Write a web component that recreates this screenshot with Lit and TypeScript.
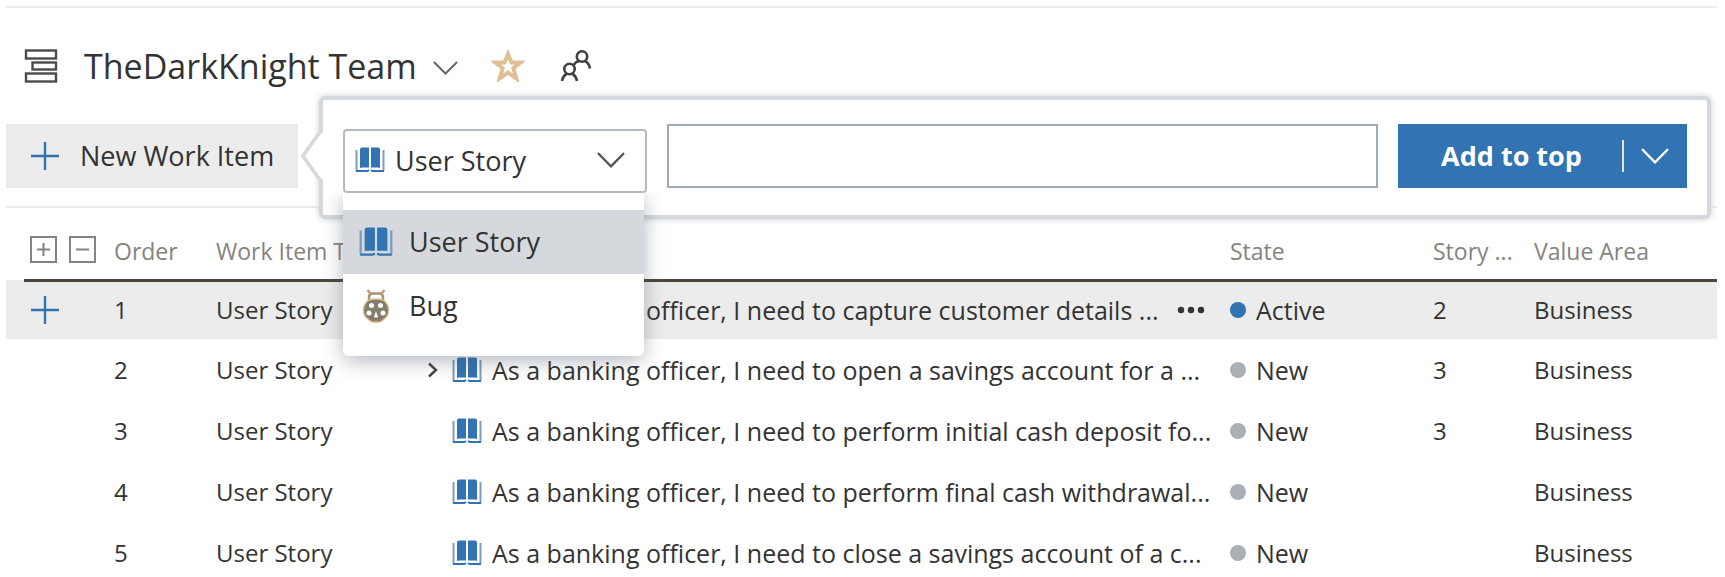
import { LitElement, html, css, svg, nothing } from "lit";
import { customElement, state } from "lit/decorators.js";

interface WorkItem {
  order: number;
  title: string;
  state: "Active" | "New";
  points?: number;
  expandable?: boolean;
}

const ITEMS: WorkItem[] = [
  { order: 1, title: "As a banking officer, I need to capture customer details ...", state: "Active", points: 2 },
  { order: 2, title: "As a banking officer, I need to open a savings account for a ...", state: "New", points: 3, expandable: true },
  { order: 3, title: "As a banking officer, I need to perform initial cash deposit fo...", state: "New", points: 3 },
  { order: 4, title: "As a banking officer, I need to perform final cash withdrawal...", state: "New" },
  { order: 5, title: "As a banking officer, I need to close a savings account of a c...", state: "New" },
];

const book = (width: number, height: number) => html`
  <svg class="icon" width=${width} height=${height} viewBox="0 0 30 26" preserveAspectRatio="none" aria-hidden="true">
    ${svg`<path d="M5 2.5Q5 .5 7 .5H14V20.5H7Q5 20.5 5 21.5ZM16 .5H23Q25 .5 25 2.5V21.5Q25 20.5 23 20.5H16Z" fill="#3173b3"/>
    <path d="M1.5 3V24M28.5 3V24" stroke="#7c9dc0" stroke-width="2" fill="none"/>
    <path d="M1 24H12.5L14 23M29 24H17.5L16 23" stroke="#3173b3" stroke-width="2" fill="none"/>`}
  </svg>`;

const plus = html`
  <svg class="icon" width="30" height="30" viewBox="0 0 30 30" aria-hidden="true">
    <path d="M15 1V29M1 15H29" stroke="#3173b3" stroke-width="2.4" fill="none" />
  </svg>`;

const chevron = (width: number, height: number) => html`
  <svg class="icon" width=${width} height=${height} viewBox="0 0 28 15" preserveAspectRatio="none" aria-hidden="true">
    <path d="M1 1L14 13.5L27 1" stroke="currentColor" stroke-width="2.2" fill="none" />
  </svg>`;

const bug = html`
  <svg class="icon" width="34" height="34" viewBox="0 0 34 34" aria-hidden="true">
    <path d="M10 12V8Q10 5 13 4.500H21Q24 5 24 8V12Z" fill="#fff" stroke="#a8926f" stroke-width="2.400" />
    <path d="M8.500 1L12 5M25.500 1L22 5" stroke="#b79c76" stroke-width="2.400" fill="none" />
    <path d="M10 11Q17 9 24 11Q29.500 15 29.500 21Q29.500 27 25 30Q22 33 20 33H14Q12 33 9 30Q4.500 27 4.500 21Q4.500 15 10 11Z" fill="#857d6e" stroke="#d9b889" stroke-width="1.400" />
    <g fill="#fff">
      <circle cx="12.500" cy="16.500" r="2.500" /><circle cx="21.500" cy="16.500" r="2.500" />
      <circle cx="10" cy="24" r="2.500" /><circle cx="24" cy="24" r="2.500" />
      <path d="M17 22L19 28Q17 29.500 15 28Z" />
    </g>
  </svg>`;

@customElement("app-root")
export class AppRoot extends LitElement {
  @state() private kind = "User Story";

  static styles = css`
    :host {
      display: block;
      box-sizing: border-box;
      height: 100vh;
      overflow: hidden;
      padding-top: 6px;
      background: #fff;
      color: #333;
      font: 24px/32px "Open Sans", "Noto Sans", sans-serif;
    }
    *, *::before, *::after { box-sizing: border-box; }
    button, select, input { font: inherit; color: inherit; margin: 0; border-radius: 0; }
    button { border: 0; padding: 0; background: none; cursor: pointer; }
    .icon { display: block; flex: none; }

    .head {
      display: flex;
      align-items: center;
      height: 118px;
      margin: 0 8px 0 6px;
      padding-left: 18px;
      border-top: 2px solid #ececec;
    }
    .team { margin: 0 0 0 26px; font: inherit; }
    .team-pick { display: flex; align-items: center; gap: 16px; font-size: 34px; line-height: 48px; }
    .team-pick .icon { margin-top: 4px; color: #666; }
    .star { margin-left: 33px; }
    .people { margin-left: 35px; }

    .toolbar {
      position: relative;
      margin: 0 8px 0 6px;
      padding-bottom: 18px;
      border-bottom: 2px solid #ececec;
    }
    .new-item {
      display: flex;
      align-items: center;
      gap: 20px;
      height: 64px;
      padding: 0 24px;
      background: #ececec;
      font-size: 27px;
    }
    .callout {
      position: absolute;
      z-index: 2;
      left: 313px;
      right: 6px;
      top: -28px;
      display: flex;
      align-items: flex-start;
      gap: 20px;
      height: 123px;
      padding: 24px 20px;
      background: #fff;
      border: 4px solid #d5d9dd;
      border-radius: 6px;
      box-shadow: 0 0 6px #ccc;
    }
    .pointer { position: absolute; left: -22px; top: 31px; }
    .kind { position: relative; flex: none; width: 304px; margin-top: 5px; }
    .kind-select {
      display: block;
      appearance: none;
      width: 100%;
      height: 64px;
      padding: 0 50px 0 50px;
      background: #fff;
      border: 2px solid #b3bac1;
      border-radius: 4px;
      font-size: 27px;
      line-height: 40px;
    }
    .kind-icon { position: absolute; left: 12px; top: 18px; pointer-events: none; }
    .kind-arrow { position: absolute; right: 22px; top: 23px; color: #555; pointer-events: none; }
    .menu {
      position: absolute;
      left: 0;
      right: 3px;
      top: 100%;
      padding: 17px 0 18px;
      background: #fff;
      border-radius: 0 0 6px 6px;
      box-shadow: 0 5px 20px rgba(70, 80, 95, 0.4);
      clip-path: inset(0 -30px -40px -30px);
    }
    .option {
      display: flex;
      align-items: center;
      gap: 16px;
      width: 100%;
      height: 64px;
      padding: 0 16px;
      font-size: 27px;
      text-align: left;
    }
    .option.on { background: #d5d9dd; }
    .title-input {
      flex: 1;
      min-width: 0;
      height: 64px;
      padding: 0 12px;
      background: #fff;
      border: 2px solid #9eabb9;
      outline: 0;
    }
    .split { display: flex; flex: none; height: 64px; background: #3173b3; color: #fff; }
    .add { width: 224px; padding-left: 3px; font-size: 27px; font-weight: 700; }
    .more { display: flex; align-items: center; width: 65px; }
    .more::before { content: ""; width: 2px; height: 32px; margin-right: 17px; background: #dbe6f1; }

    .grid-wrap { margin: 0 8px 0 24px; }
    .grid { width: 100%; table-layout: fixed; border-collapse: collapse; }
    .c-tools { width: 80px; }
    .c-order { width: 102px; }
    .c-type { width: 208px; }
    .c-state { width: 203px; }
    .c-points { width: 101px; }
    .c-area { width: 193px; }
    th, td { padding: 0 0 0 10px; text-align: left; font-weight: 400; white-space: nowrap; }
    th { height: 72px; padding-top: 16px; color: #85837f; border-bottom: 3px solid #4b473e; font-size: 23px; }
    th:first-child, td:first-child { padding-left: 6px; }
    td { height: 61px; }
    .row.on { background: #ececec; box-shadow: -18px 0 0 #ececec; }
    .row.on td { height: 59px; }
    .row-plus { display: block; }
    .tools { display: flex; gap: 12px; padding-bottom: 4px; }
    .title, .status { display: flex; align-items: center; font-size: 25px; }
    .twisty { display: flex; width: 28px; padding-left: 4px; }
    .title .text { margin-left: 10px; }
    .dots { margin-left: auto; margin-right: 15px; }
    .status { gap: 10px; }
    .dot { width: 16px; height: 16px; border-radius: 50%; background: #aab0b6; }
    .dot.active { background: #3173b3; }
  `;

  private pick(kind: string) {
    this.kind = kind;
  }

  private renderHead() {
    return html`
      <header class="head">
        <svg class="icon" width="34" height="34" viewBox="0 0 34 34" fill="#fff" stroke="#4a4a4a" stroke-width="2.400" aria-hidden="true">
          <rect x="2" y="1.500" width="30" height="8" /><rect x="8.500" y="13.500" width="23.500" height="7" /><rect x="2" y="24.500" width="30" height="8" />
        </svg>
        <h1 class="team">
          <button class="team-pick">TheDarkKnight Team ${chevron(25, 14)}</button>
        </h1>
        <button class="star" aria-label="Favorite">
          <svg class="icon" width="34" height="32" viewBox="0 0 34 32" aria-hidden="true">
            <path d="M17 4L20.400 12.600H29.500L22.400 18.200L25.300 28.500L17 22.500L8.700 28.500L11.600 18.200L4.500 12.600H13.600Z" fill="#fff" stroke="#dfbf93" stroke-width="4" />
          </svg>
        </button>
        <button class="people" aria-label="Team members">
          <svg class="icon" width="32" height="34" viewBox="0 0 32 34" fill="none" stroke="#404040" stroke-width="2.600" aria-hidden="true">
            <circle cx="9.500" cy="20" r="5.200" /><path d="M2 32Q3 27 6.500 25M12.500 25Q16 27 17 32" />
            <circle cx="22" cy="7.500" r="5.200" /><path d="M13.500 16.500Q15 13 19 12M25 12Q29 14 30 19.500" />
          </svg>
        </button>
      </header>`;
  }

  private renderOption(kind: string, icon: unknown) {
    const on = kind === this.kind;
    return html`<button class="option ${on ? "on" : ""}" role="option" aria-selected=${on} @click=${() => this.pick(kind)}>
      ${icon}<span>${kind}</span>
    </button>`;
  }

  private renderToolbar() {
    return html`
      <section class="toolbar">
        <button class="new-item">${plus}<span>New Work Item</span></button>
        <form class="callout" @submit=${(e: Event) => e.preventDefault()}>
          <svg class="pointer" width="22" height="50" viewBox="0 0 22 50" aria-hidden="true">
            <path d="M22 2H20.500L2 25L20.500 48H22Z" fill="#fff" />
            <path d="M19 1L2 25L19 49" fill="none" stroke="#d5d9dd" stroke-width="3.600" />
          </svg>
          <div class="kind">
            <select class="kind-select" aria-label="Work item type" .value=${this.kind}
              @change=${(e: Event) => this.pick((e.target as HTMLSelectElement).value)}>
              <option>User Story</option>
              <option>Bug</option>
            </select>
            <span class="kind-icon">${book(30, 26)}</span>
            <span class="kind-arrow">${chevron(28, 16)}</span>
            <div class="menu" role="listbox" aria-label="Work item types">
              ${this.renderOption("User Story", book(34, 30))}
              ${this.renderOption("Bug", bug)}
            </div>
          </div>
          <input class="title-input" type="text" aria-label="Title" />
          <div class="split">
            <button class="add">Add to top</button>
            <button class="more" aria-label="More add options">${chevron(28, 16)}</button>
          </div>
        </form>
      </section>`;
  }

  private renderRow(item: WorkItem) {
    const active = item.state === "Active";
    return html`
      <tr class="row ${active ? "on" : ""}">
        <td>${active ? html`<button class="row-plus" aria-label="Add child item">${plus}</button>` : nothing}</td>
        <td>${item.order}</td>
        <td>User Story</td>
        <td>
          <div class="title">
            <span class="twisty">${item.expandable
              ? html`<svg class="icon" width="10" height="16" viewBox="0 0 10 16" aria-hidden="true"><path d="M1 1.500L8 8L1 14.500" fill="none" stroke="#444" stroke-width="2.400" /></svg>`
              : nothing}</span>
            ${book(30, 26)}
            <span class="text">${item.title}</span>
            ${active
              ? html`<button class="dots" aria-label="More actions"><svg class="icon" width="28" height="8" viewBox="0 0 28 8" fill="#333" aria-hidden="true"><circle cx="4" cy="4" r="3.200" /><circle cx="14" cy="4" r="3.200" /><circle cx="24" cy="4" r="3.200" /></svg></button>`
              : nothing}
          </div>
        </td>
        <td><span class="status"><i class="dot ${active ? "active" : ""}"></i>${item.state}</span></td>
        <td>${item.points ?? nothing}</td>
        <td>Business</td>
      </tr>`;
  }

  render() {
    return html`
      ${this.renderHead()} ${this.renderToolbar()}
      <main class="grid-wrap">
        <table class="grid">
          <colgroup>
            <col class="c-tools" /><col class="c-order" /><col class="c-type" /><col />
            <col class="c-state" /><col class="c-points" /><col class="c-area" />
          </colgroup>
          <thead>
            <tr>
              <th>
                <div class="tools">
                  <button aria-label="Expand all"><svg class="icon" width="27" height="27" viewBox="0 0 27 27" fill="none" stroke="#85837f" stroke-width="2" aria-hidden="true"><path d="M1 1H26V26H1ZM13.500 7V20M7 13.500H20" /></svg></button>
                  <button aria-label="Collapse all"><svg class="icon" width="27" height="27" viewBox="0 0 27 27" fill="none" stroke="#85837f" stroke-width="2" aria-hidden="true"><path d="M1 1H26V26H1ZM7 13.500H20" /></svg></button>
                </div>
              </th>
              <th>Order</th>
              <th>Work Item Type</th>
              <th aria-label="Title"></th>
              <th>State</th>
              <th>Story ...</th>
              <th>Value Area</th>
            </tr>
          </thead>
          <tbody>${ITEMS.map((item) => this.renderRow(item))}</tbody>
        </table>
      </main>`;
  }
}
